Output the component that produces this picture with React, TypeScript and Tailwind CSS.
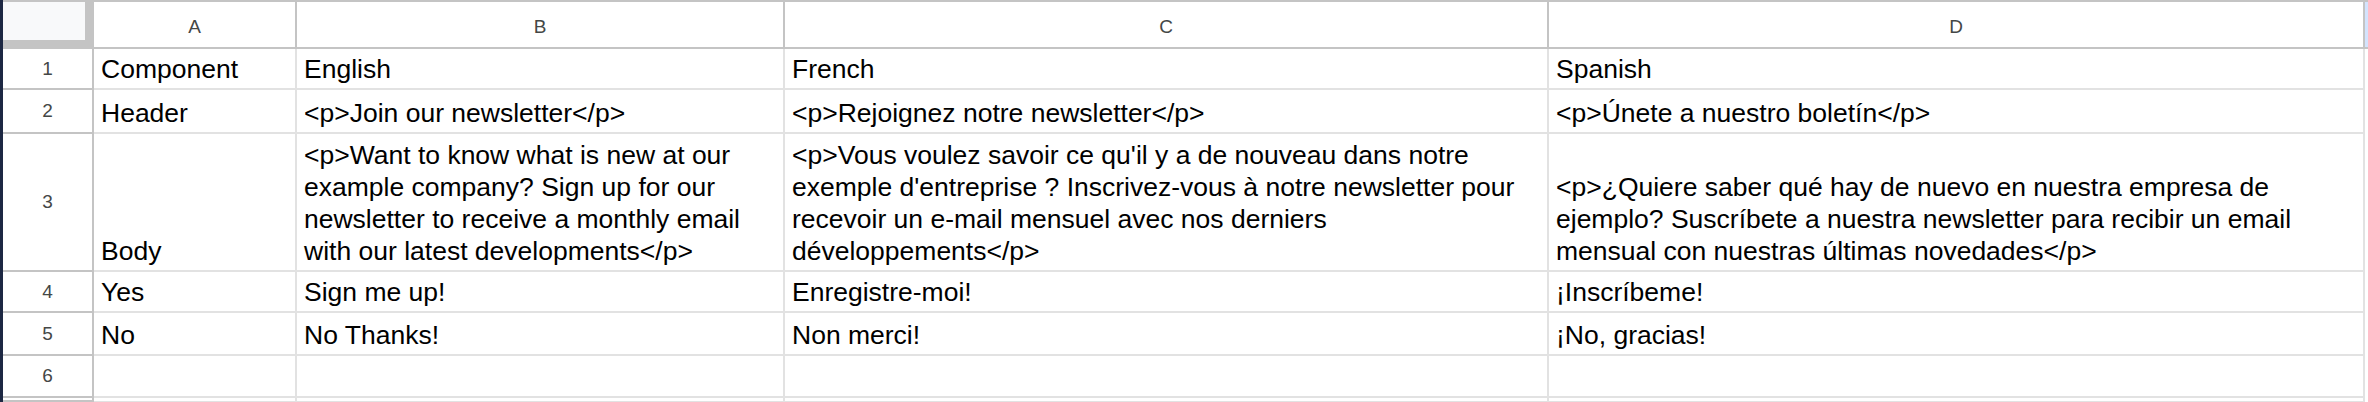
const rows = [
  {
    n: "1",
    h: "h-[41px]",
    cells: [["Component"], ["English"], ["French"], ["Spanish"]],
  },
  {
    n: "2",
    h: "h-[44px]",
    cells: [
      ["Header"],
      ["<p>Join our newsletter</p>"],
      ["<p>Rejoignez notre newsletter</p>"],
      ["<p>Únete a nuestro boletín</p>"],
    ],
  },
  {
    n: "3",
    h: "h-[138px]",
    cells: [
      ["Body"],
      [
        "<p>Want to know what is new at our",
        "example company? Sign up for our",
        "newsletter to receive a monthly email",
        "with our latest developments</p>",
      ],
      [
        "<p>Vous voulez savoir ce qu'il y a de nouveau dans notre",
        "exemple d'entreprise ? Inscrivez-vous à notre newsletter pour",
        "recevoir un e-mail mensuel avec nos derniers",
        "développements</p>",
      ],
      [
        "<p>¿Quiere saber qué hay de nuevo en nuestra empresa de",
        "ejemplo? Suscríbete a nuestra newsletter para recibir un email",
        "mensual con nuestras últimas novedades</p>",
      ],
    ],
  },
  {
    n: "4",
    h: "h-[41px]",
    cells: [["Yes"], ["Sign me up!"], ["Enregistre-moi!"], ["¡Inscríbeme!"]],
  },
  {
    n: "5",
    h: "h-[43px]",
    cells: [["No"], ["No Thanks!"], ["Non merci!"], ["¡No, gracias!"]],
  },
  { n: "6", h: "h-[42px]", cells: [[], [], [], []] },
  { n: "", h: "h-[4px]", cells: [[], [], [], []] },
];

const widths = ["w-[203px]", "w-[488px]", "w-[764px]", "w-[816px]"];

export default function App() {
  return (
    <div className="flex h-[402px] w-[2368px] overflow-hidden bg-white font-['Liberation_Sans',Arial,sans-serif]">
      {/* window edge */}
      <div className="w-[3px] shrink-0 bg-[#1d2843]" />

      <div className="flex flex-1 flex-col border-t-2 border-[#c4c4c4]">
        {/* column headers */}
        <div className="flex h-[47px] shrink-0 border-b-2 border-[#c4c4c4]">
          <div className="w-[91px] shrink-0 bg-[#c4c4c4]">
            <div className="h-[38px] w-[82px] bg-[#f8f9fa]" />
          </div>
          {["A", "B", "C", "D"].map((l, i) => (
            <div
              key={l}
              className={`${widths[i]} flex shrink-0 items-center justify-center border-r-2 border-[#c4c4c4] pt-[5px] text-[19px] text-[#444746]`}
            >
              {l}
            </div>
          ))}
          <div className="flex-1 bg-[#d3e3fd]" />
        </div>

        {rows.map((r, ri) => (
          <div key={ri} className={`flex ${r.h} shrink-0`}>
            <div className="flex w-[91px] shrink-0 items-center justify-center border-r-2 border-b-2 border-[#c4c4c4] pt-[1px] text-[19px] text-[#444746]">
              {r.n}
            </div>
            {r.cells.map((lines, ci) => (
              <div
                key={ci}
                className={`${widths[ci]} flex shrink-0 flex-col justify-end overflow-hidden border-r-2 border-b-2 border-[#e2e2e2] pb-[3px] pl-[7px] text-[26.5px] leading-[32px] text-black`}
              >
                {lines.map((t, k) => (
                  <div key={k} className="whitespace-nowrap">
                    {t}
                  </div>
                ))}
              </div>
            ))}
            <div className="flex-1" />
          </div>
        ))}
      </div>
    </div>
  );
}
